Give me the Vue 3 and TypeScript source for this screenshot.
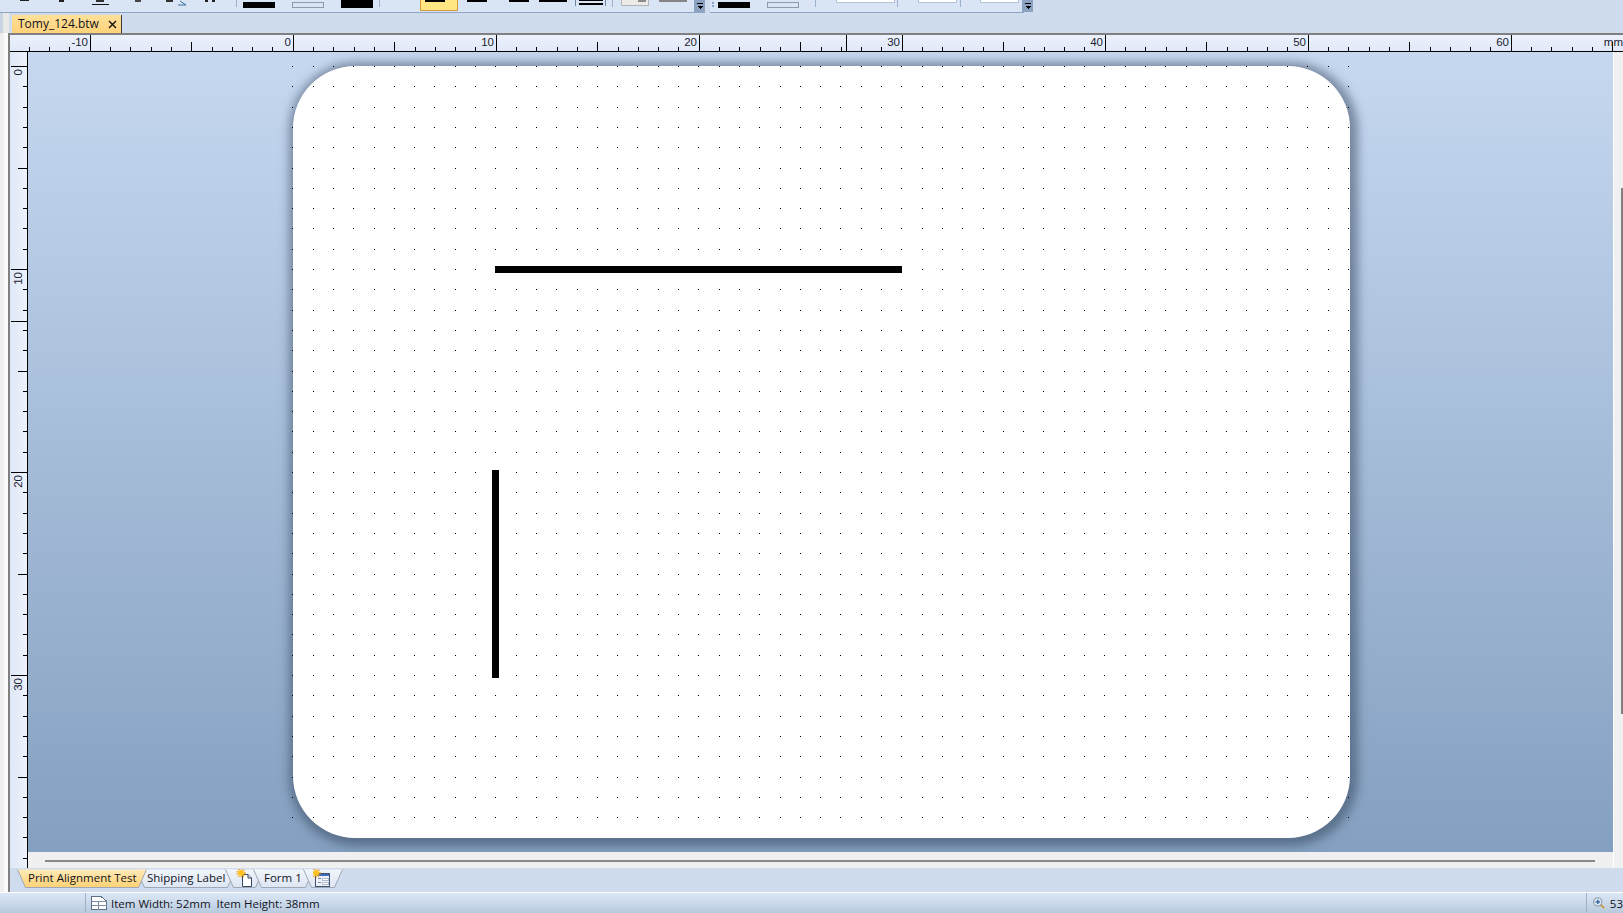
<template>
  <div class="app">
    <div class="toolbar">
      <svg class="toolbar__icons" width="1040" height="13" viewBox="0 0 1040 13" shape-rendering="crispEdges">
        <rect x="0" y="0" width="705" height="12" fill="#d9e5f5" />
        <rect x="0" y="12" width="705" height="1" fill="#8ea5c4" />
        <rect x="710" y="0" width="314" height="12" fill="#d9e5f5" />
        <rect x="710" y="12" width="314" height="1" fill="#8ea5c4" />
        <!-- cut off glyphs of the formatting buttons -->
        <rect x="20" y="0" width="9" height="1" fill="#222" />
        <rect x="59" y="0" width="5" height="2" fill="#222" />
        <rect x="96" y="0" width="8" height="2" fill="#333" />
        <rect x="92" y="4" width="17" height="1" fill="#111" />
        <rect x="135" y="0" width="6" height="2" fill="#444" />
        <rect x="166" y="0" width="7" height="2" fill="#333" />
        <path d="M178 5 L186 5 L180 1" fill="none" stroke="#3b6f9e" stroke-width="1" shape-rendering="auto" />
        <rect x="205" y="0" width="3" height="2" fill="#222" />
        <rect x="212" y="0" width="3" height="2" fill="#222" />
        <rect x="236" y="0" width="1" height="7" fill="#9db1cb" />
        <rect x="243" y="2" width="32" height="6" fill="#000" />
        <rect x="292.5" y="2.5" width="31" height="5" fill="#d9e5f5" stroke="#8d9aa8" />
        <rect x="341" y="0" width="32" height="8" fill="#000" />
        <rect x="379" y="0" width="1" height="7" fill="#9db1cb" />
        <rect x="420.5" y="-2" width="37" height="12.5" fill="#ffe682" stroke="#d09a3d" />
        <rect x="425" y="0" width="20" height="2" fill="#000" />
        <rect x="467" y="0" width="20" height="2" fill="#000" />
        <rect x="509" y="0" width="20" height="2" fill="#000" />
        <rect x="539" y="0" width="28" height="2" fill="#000" />
        <rect x="575" y="0" width="1" height="6" fill="#6f86a3" />
        <rect x="579" y="0" width="24" height="1" fill="#000" />
        <rect x="579" y="3" width="24" height="2" fill="#000" />
        <rect x="605" y="0" width="1" height="6" fill="#6f86a3" />
        <rect x="612" y="0" width="1" height="7" fill="#9db1cb" />
        <rect x="621.5" y="-2" width="27" height="7.5" fill="#ecebe8" stroke="#b5b5b5" />
        <rect x="638" y="0" width="8" height="2" fill="#8c8c8c" />
        <rect x="659" y="0" width="28" height="2" fill="#858585" />
        <rect x="694" y="0" width="11" height="12" fill="#8ba2c0" />
        <rect x="697" y="3" width="6" height="1" fill="#000" />
        <path d="M697 6 h6 l-3 3 z" fill="#000" />
        <rect x="712" y="2" width="2" height="2" fill="#8ea5c4" />
        <rect x="712" y="5" width="2" height="2" fill="#8ea5c4" />
        <rect x="718" y="2" width="32" height="6" fill="#000" />
        <rect x="767.5" y="2.5" width="31" height="5" fill="#d9e5f5" stroke="#8d9aa8" />
        <rect x="815" y="0" width="1" height="7" fill="#9db1cb" />
        <rect x="836.5" y="-2" width="58" height="4" fill="#fff" stroke="#b4c4d8" />
        <rect x="897" y="0" width="1" height="7" fill="#9db1cb" />
        <rect x="918.5" y="-2" width="38" height="4" fill="#fff" stroke="#b4c4d8" />
        <rect x="960" y="0" width="1" height="7" fill="#9db1cb" />
        <rect x="980.5" y="-2" width="38" height="4" fill="#fff" stroke="#b4c4d8" />
        <rect x="1022" y="0" width="11" height="12" fill="#8ba2c0" />
        <rect x="1025" y="3" width="6" height="1" fill="#000" />
        <path d="M1025 6 h6 l-3 3 z" fill="#000" />
      </svg>
    </div>

    <div class="doc-tabs">
      <div class="doc-tab">
        <span class="doc-tab__name">Tomy_124.btw</span>
        <svg width="9" height="9" viewBox="0 0 9 9">
          <path d="M1 1 L8 8 M8 1 L1 8" stroke="#111" stroke-width="1.4" fill="none" />
        </svg>
      </div>
    </div>

    <div class="body">
      <div class="rail"></div>
      <div class="content">
        <div class="work">
          <svg class="ruler ruler--top" width="1613" height="19" shape-rendering="crispEdges">
            <rect x="0" y="0" width="1613" height="2" fill="#808083" />
            <rect x="0" y="18" width="1613" height="1" fill="#000" />
            <rect
              v-for="t in topTicks"
              :key="t.mm"
              :x="t.pos"
              :y="t.start"
              width="1"
              :height="18 - t.start"
              fill="#000"
            />
            <rect x="836" y="2" width="1" height="16" fill="#000" />
            <text
              v-for="t in topLabels"
              :key="t.mm"
              :x="t.pos - 2"
              y="13"
              text-anchor="end"
              class="ruler__text"
            >{{ t.mm }}</text>
            <text x="1613" y="13" text-anchor="end" class="ruler__text">mm</text>
          </svg>

          <svg class="ruler ruler--left" width="18" height="816" shape-rendering="crispEdges">
            <rect x="17" y="0" width="1" height="816" fill="#000" />
            <rect
              v-for="t in leftTicks"
              :key="t.mm"
              :x="t.start"
              :y="t.pos"
              :width="18 - t.start"
              height="1"
              fill="#000"
            />
            <rect x="1" y="269" width="16" height="1" fill="#000" />
            <text
              v-for="t in leftLabels"
              :key="t.mm"
              :transform="`translate(12 ${t.pos + 3}) rotate(-90)`"
              text-anchor="end"
              class="ruler__text"
            >{{ t.mm }}</text>
          </svg>

          <div class="canvas">
            <div class="paper"></div>
            <svg class="dots" width="1340" height="800" shape-rendering="crispEdges">
              <path :d="dotPath" fill="#000" />
            </svg>
            <div class="line line--h"></div>
            <div class="line line--v"></div>
          </div>

          <div class="side">
            <div class="side__thumb"></div>
          </div>

          <div class="hscroll">
            <div class="hscroll__thumb"></div>
          </div>
        </div>

        <div class="sheet-tabs">
          <div
            v-for="tab in sheetTabs"
            :key="tab.id"
            class="sheet-tab"
            :class="{ 'sheet-tab--active': tab.active }"
            :style="{ width: tab.width + 'px' }"
          >
            <svg class="sheet-tab__shape" :width="tab.width + 10" height="19">
              <defs>
                <linearGradient id="tabOn" x1="0" y1="0" x2="0" y2="1">
                  <stop offset="0" stop-color="#ffeab8" />
                  <stop offset="1" stop-color="#ffd274" />
                </linearGradient>
                <linearGradient id="tabOff" x1="0" y1="0" x2="0" y2="1">
                  <stop offset="0" stop-color="#f1f5fb" />
                  <stop offset="1" stop-color="#dde6f3" />
                </linearGradient>
              </defs>
              <path
                :d="`M0.5 0.5 L8.5 18.5 L${tab.width + 0.5} 18.5 L${tab.width + 8.5} 0.5`"
                :fill="tab.active ? 'url(#tabOn)' : 'url(#tabOff)'"
                stroke="#9ea7b3"
              />
            </svg>
            <span v-if="tab.label" class="sheet-tab__label">{{ tab.label }}</span>
            <svg v-else-if="tab.icon === 'page'" class="sheet-tab__icon" width="20" height="19" viewBox="0 0 20 19">
              <path d="M7.5 5.5 H13 L16.5 9 V17.5 H7.5 Z" fill="#fff" stroke="#33475f" />
              <path d="M13 5.5 V9 H16.5" fill="#dfe7f2" stroke="#33475f" />
              <circle cx="6" cy="4" r="3" fill="#ffc21f" />
              <circle cx="6" cy="4" r="4" fill="none" stroke="#f29a12" stroke-width="1.2" stroke-dasharray="1.4 1.2" />
            </svg>
            <svg v-else class="sheet-tab__icon" width="20" height="19" viewBox="0 0 20 19" shape-rendering="crispEdges">
              <rect x="2.5" y="4.5" width="14" height="13" fill="#eef2f8" stroke="#3c5270" />
              <rect x="3" y="5" width="13" height="2" fill="#3b6fb8" />
              <rect x="5" y="9" width="3" height="1" fill="#7a8ca3" />
              <rect x="9" y="9" width="6" height="2" fill="#fff" stroke="#6d85a5" stroke-width="0.5" />
              <rect x="5" y="13" width="3" height="1" fill="#7a8ca3" />
              <rect x="9" y="13" width="6" height="2" fill="#fff" stroke="#6d85a5" stroke-width="0.5" />
              <circle cx="3" cy="4" r="3" fill="#ffc21f" shape-rendering="auto" />
              <circle cx="3" cy="4" r="4" fill="none" stroke="#f29a12" stroke-width="1.2" stroke-dasharray="1.4 1.2" shape-rendering="auto" />
            </svg>
          </div>
        </div>
      </div>
    </div>

    <div class="status">
      <div class="status__item">
        <svg width="16" height="14" viewBox="0 0 16 14" shape-rendering="crispEdges">
          <path d="M0.5 0.5 H10 L15.5 5 V13.5 H0.5 Z" fill="#fff" stroke="#5d7088" />
          <path d="M0.5 5.5 H15.5 M0.5 9.5 H15.5 M7.5 5.5 V13.5" fill="none" stroke="#7e90a6" />
        </svg>
        <span>Item Width: 52mm&nbsp;&nbsp;Item Height: 38mm</span>
      </div>
      <div class="status__zoom">
        <svg width="16" height="16" viewBox="0 0 16 16">
          <path d="M10 10 L15 15" stroke="#c99a2e" stroke-width="2.4" />
          <circle cx="6.5" cy="6.5" r="5.5" fill="#dbe6f2" stroke="#7d8a99" stroke-width="1.2" />
          <path d="M6.5 3.5 V9.5 M3.5 6.5 H9.5" stroke="#2f5f9e" stroke-width="1.8" />
        </svg>
        <span>53</span>
      </div>
    </div>
  </div>
</template>

<script setup lang="ts">
import { computed } from "vue";

interface Tick {
  mm: number;
  pos: number;
  start: number;
}

interface SheetTab {
  id: number;
  width: number;
  label?: string;
  icon?: "page" | "form";
  active?: boolean;
}

const mmPx = 20.3;
// where 0 mm falls inside each ruler
const topZero = 292.7 - 10;
const leftZero = 66 - 52;

const tickStart = (mm: number, major: number, half: number, minor: number) => {
  if (mm % 10 === 0) return major;
  if (mm % 5 === 0) return half;
  return minor;
};

const topTicks = computed<Tick[]>(() => {
  const list: Tick[] = [];
  for (let mm = -13; mm <= 65; mm++) {
    const pos = Math.round(topZero + mm * mmPx);
    list.push({ mm, pos, start: tickStart(mm, 2, 9, 14) });
  }
  return list;
});

const leftTicks = computed<Tick[]>(() => {
  const list: Tick[] = [];
  for (let mm = 0; mm <= 39; mm++) {
    const pos = Math.round(leftZero + mm * mmPx);
    list.push({ mm, pos, start: tickStart(mm, 1, 8, 13) });
  }
  return list;
});

const topLabels = computed(() => topTicks.value.filter((t) => t.mm % 10 === 0));
const leftLabels = computed(() => leftTicks.value.filter((t) => t.mm % 10 === 0 && t.mm <= 30));

const dotPath = computed(() => {
  let d = "";
  for (let row = 0; row < 38; row++) {
    for (let col = 0; col < 53; col++) {
      const x = Math.round(264.3 + col * mmPx);
      const y = Math.round(14 + row * mmPx);
      d += `M${x} ${y}h1v1h-1z`;
    }
  }
  return d;
});

const sheetTabs: SheetTab[] = [
  { id: 4, width: 121, label: "Print Alignment Test", active: true },
  { id: 1, width: 91, label: "Shipping Label" },
  { id: 2, width: 30, icon: "page" },
  { id: 3, width: 52, label: "Form 1" },
  { id: 5, width: 31, icon: "form" },
];
</script>

<style>
html,
body {
  margin: 0;
  overflow: hidden;
}
</style>

<style scoped>
.app {
  width: 1623px;
  height: 913px;
  display: flex;
  flex-direction: column;
  overflow: hidden;
  background: #cfdcee;
  font-family: "Open Sans", "Liberation Sans", sans-serif;
  color: #10131c;
}

.toolbar {
  height: 13px;
  flex: none;
  overflow: hidden;
}

.toolbar__icons {
  display: block;
}

.doc-tabs {
  height: 20px;
  flex: none;
  display: flex;
  align-items: flex-end;
  padding-left: 12px;
  background: linear-gradient(90deg, #c9d3e2 0, #c9d3e2 3px, #e9e9e9 3px, #e9e9e9 9px, #cfdcee 9px);
}

.doc-tab {
  width: 110px;
  height: 18px;
  padding: 0 4px 0 6px;
  box-sizing: border-box;
  display: flex;
  align-items: center;
  justify-content: space-between;
  background: linear-gradient(#ffe09a, #ffd27a);
  border-right: 1px solid #3a3a3a;
  font-size: 12px;
  font-weight: 500;
}

.doc-tab__name {
  line-height: 18px;
}

.body {
  height: 859px;
  flex: none;
  display: flex;
}

.rail {
  width: 10px;
  flex: none;
  box-sizing: border-box;
  background: linear-gradient(90deg, #efefef 0, #efefef 4px, #fbfbfb 4px);
  border-right: 2px solid #808080;
}

.content {
  flex: 1;
  min-width: 0;
  display: flex;
  flex-direction: column;
}

.work {
  display: grid;
  grid-template-columns: 18px 1fr 10px;
  grid-template-rows: 19px 800px 16px;
  height: 835px;
}

.ruler {
  display: block;
}

.ruler--top {
  grid-column: 1 / 4;
  grid-row: 1;
  background: linear-gradient(#eef3fd, #dfe8f7);
}

.ruler--left {
  grid-column: 1;
  grid-row: 2 / 4;
  background: linear-gradient(90deg, #dfe8f7, #eef3fd);
}

.ruler__text {
  font-family: "Liberation Sans", sans-serif;
  font-size: 11.5px;
  fill: #1a2230;
}

.canvas {
  grid-column: 2;
  grid-row: 2;
  position: relative;
  overflow: hidden;
  background: linear-gradient(#c6d8f0, #84a0c0);
}

.paper {
  position: absolute;
  left: 264.5px;
  top: 14px;
  width: 1057px;
  height: 772px;
  border-radius: 62px;
  background: #fff;
  box-shadow: 2px 2px 10px 6px rgba(50, 65, 90, 0.5);
}

.dots {
  position: absolute;
  left: 0;
  top: 0;
}

.line {
  position: absolute;
  background: #000;
}

.line--h {
  left: 467px;
  top: 214px;
  width: 407px;
  height: 7px;
}

.line--v {
  left: 464px;
  top: 418px;
  width: 7px;
  height: 208px;
}

.side {
  grid-column: 3;
  grid-row: 2 / 4;
  position: relative;
  background: #f0f0f0;
  border-left: 1px solid #fff;
}

.side__thumb {
  position: absolute;
  right: 0;
  top: 136px;
  width: 2px;
  height: 526px;
  background: #808080;
}

.hscroll {
  grid-column: 2;
  grid-row: 3;
  padding: 8px 18px 0 17px;
  background: #f0f0f0;
}

.hscroll__thumb {
  height: 2px;
  background: #888;
}

.sheet-tabs {
  height: 24px;
  flex: none;
  display: flex;
  padding: 1px 0 0 7px;
  box-sizing: border-box;
  background: #cfdcee;
}

.sheet-tab {
  position: relative;
  height: 19px;
  flex: none;
  margin-right: -2px;
  font-size: 11.5px;
  line-height: 17px;
}

.sheet-tab--active {
  z-index: 1;
}

.sheet-tab__shape {
  position: absolute;
  left: 0;
  top: 0;
}

.sheet-tab__label {
  position: relative;
  display: block;
  padding-left: 11px;
  white-space: nowrap;
}

.sheet-tab__icon {
  position: absolute;
  left: 10px;
  top: 0;
}

.status {
  flex: 1;
  display: flex;
  align-items: center;
  justify-content: space-between;
  border-top: 1px solid #fff;
  background: linear-gradient(#dce7f6, #b8cade);
  font-size: 11.5px;
}

.status__item {
  height: 100%;
  margin-left: 85px;
  padding-left: 5px;
  display: flex;
  align-items: center;
  gap: 4px;
  border-left: 1px solid #9db1cb;
}

.status__zoom {
  width: 37px;
  height: 100%;
  box-sizing: border-box;
  padding-left: 6px;
  display: flex;
  align-items: center;
  gap: 5px;
  border-left: 1px solid #9db1cb;
  overflow: hidden;
  flex: none;
}
</style>
